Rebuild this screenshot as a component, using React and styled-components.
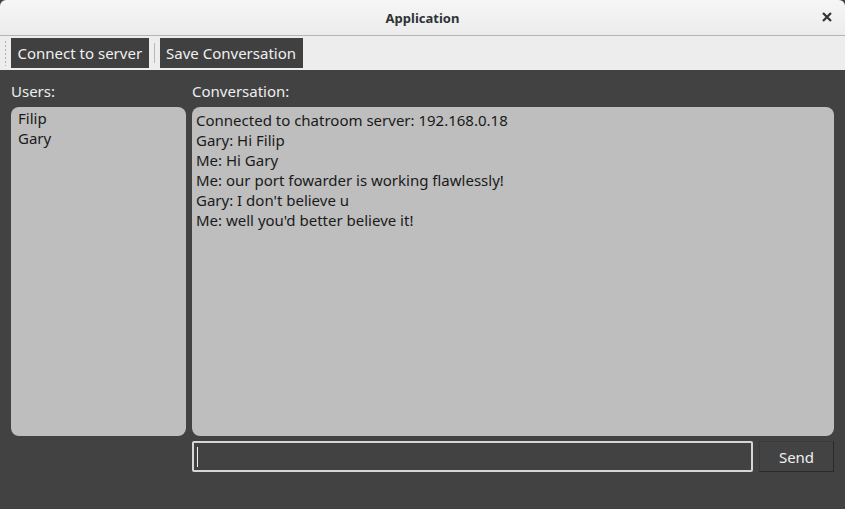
import React from "react";
import styled, { createGlobalStyle } from "styled-components";

const Global = createGlobalStyle`
  html, body { margin: 0; padding: 0; background: #424242; }
  body { font-family: "Noto Sans", "DejaVu Sans", sans-serif; }
  #root { width: 845px; height: 509px; }
`;

const Window = styled.div`
  width: 845px;
  height: 509px;
  display: flex;
  flex-direction: column;
  background: #424242;
  overflow: hidden;
`;

const TitleBar = styled.div`
  height: 35px;
  flex: none;
  display: flex;
  align-items: center;
  justify-content: center;
  position: relative;
  background: linear-gradient(#f6f6f6, #ececec);
  border-bottom: 1px solid #b4b4b4;
  border-radius: 6px 6px 0 0;
`;

const Title = styled.div`
  font-size: 13px;
  font-weight: 700;
  color: #2e3436;
`;

const CloseButton = styled.div`
  position: absolute;
  right: 12px;
  top: 11px;
  width: 12px;
  height: 12px;
  display: flex;
`;

const Toolbar = styled.div`
  height: 34px;
  flex: none;
  display: flex;
  align-items: center;
  background: #ededed;
  padding: 0 0 0 4px;
`;

const Grip = styled.div`
  width: 3px;
  height: 26px;
  margin-right: 4px;
  background-image: radial-gradient(circle, #b0b0b0 0.8px, transparent 1.1px);
  background-size: 3px 4px;
`;

const ToolButton = styled.button`
  height: 30px;
  padding: 0 6.5px;
  border: none;
  background: #404040;
  color: #f0f0f0;
  font-family: inherit;
  font-size: 15px;
  cursor: default;
`;

const Separator = styled.div`
  width: 1px;
  height: 20px;
  background: #b8b8b8;
  margin: 0 5px;
`;

const Main = styled.div`
  flex: 1;
  display: grid;
  grid-template-columns: 175px 1fr;
  grid-template-rows: 37px 329px 37px;
  column-gap: 6px;
  padding: 0 11px;
`;

const Label = styled.div`
  color: #eeeeee;
  font-size: 15px;
  display: flex;
  align-items: center;
  padding-top: 4px;
`;

const ListBox = styled.div`
  background: #bebebe;
  border-radius: 8px;
  padding: ${(p) => p.$pad};
  font-size: 15px;
  color: #1a1a1a;
`;

const Line = styled.div`
  height: 20px;
  line-height: 20px;
  white-space: nowrap;
`;

const InputRow = styled.div`
  grid-column: 2;
  display: flex;
  align-items: flex-start;
  padding-top: 5px;
  gap: 6px;
`;

const TextInput = styled.div`
  flex: 1;
  height: 31px;
  box-sizing: border-box;
  border: 2px solid #d6d6d6;
  border-radius: 2px;
  background: #424242;
  display: flex;
  align-items: center;
  padding-left: 3px;
`;

const Caret = styled.div`
  width: 1px;
  height: 20px;
  background: #f0f0f0;
`;

const SendButton = styled.button`
  width: 75px;
  height: 31px;
  box-sizing: border-box;
  background: #434343;
  border: 1px solid #2a2a2a;
  border-top-color: #3a3a3a;
  border-left-color: #3a3a3a;
  color: #f0f0f0;
  font-family: inherit;
  font-size: 15px;
`;

const users = ["Filip", "Gary"];
const messages = [
  "Connected to chatroom server: 192.168.0.18",
  "Gary: Hi Filip",
  "Me: Hi Gary",
  "Me: our port fowarder is working flawlessly!",
  "Gary: I don't believe u",
  "Me: well you'd better believe it!",
];

export default function App() {
  return (
    <Window>
      <Global />
      <TitleBar>
        <Title>Application</Title>
        <CloseButton>
          <svg width="12" height="12" viewBox="0 0 12 12">
            <path d="M2 2 L10 10 M10 2 L2 10" stroke="#2e3436" strokeWidth="2.2" />
          </svg>
        </CloseButton>
      </TitleBar>
      <Toolbar>
        <Grip />
        <ToolButton>Connect to server</ToolButton>
        <Separator />
        <ToolButton>Save Conversation</ToolButton>
      </Toolbar>
      <Main>
        <Label>Users:</Label>
        <Label>Conversation:</Label>
        <ListBox $pad="1px 7px">
          {users.map((u) => (
            <Line key={u}>{u}</Line>
          ))}
        </ListBox>
        <ListBox $pad="3px 4px">
          {messages.map((m) => (
            <Line key={m}>{m}</Line>
          ))}
        </ListBox>
        <InputRow>
          <TextInput>
            <Caret />
          </TextInput>
          <SendButton>Send</SendButton>
        </InputRow>
      </Main>
    </Window>
  );
}
